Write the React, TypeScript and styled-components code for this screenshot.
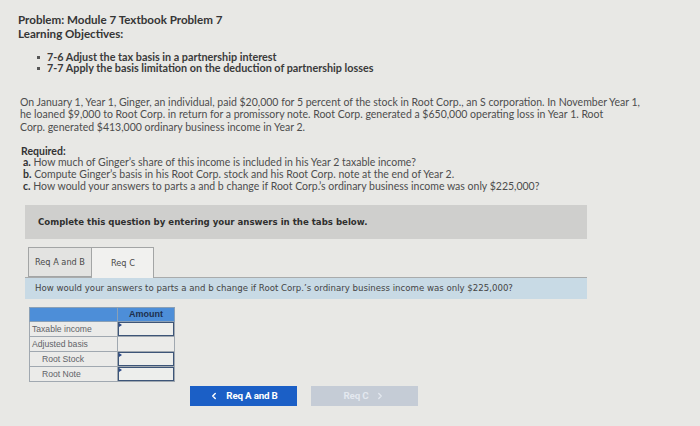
import React from 'react';
import styled, { createGlobalStyle } from 'styled-components';
import { ChevronLeft, ChevronRight } from 'lucide-react';

const GlobalStyle = createGlobalStyle`
  html, body {
    margin: 0;
    padding: 0;
    background: #e8e8e5;
  }
`;

const Page = styled.div`
  width: 700px;
  height: 426px;
  overflow: hidden;
  background: #e8e8e5;
  font-family: Lato, "Open Sans", sans-serif;
  color: #3c3c3c;
  padding: 13px 0 0 18px;
  box-sizing: border-box;
`;

const Title = styled.div`
  font-size: 11.6px;
  line-height: 13.5px;
  font-weight: 700;
  color: #353535;
`;

const Objectives = styled.ul`
  margin: 10.5px 0 0 0;
  padding: 0 0 0 29px;
  list-style: none;
`;

const Objective = styled.li`
  position: relative;
  font-size: 10.8px;
  line-height: 11.6px;
  font-weight: 700;
  color: #3a3a3a;

  &::before {
    content: '';
    position: absolute;
    left: -10px;
    top: 5px;
    width: 3px;
    height: 3px;
    background: #555;
  }
`;

const Body = styled.p`
  margin: 22px 0 0 2px;
  font-size: 10.5px;
  line-height: 12.5px;
  color: #4d4d4d;
  white-space: nowrap;
`;

const Required = styled.div`
  margin: 12.5px 0 0 3px;
  font-size: 10.5px;
  line-height: 11.7px;
  color: #4d4d4d;
`;

const Strong = styled.span`
  font-weight: 700;
  color: #333;
`;

const Part = styled.div`
  padding-left: 2px;
`;

const Work = styled.div`
  margin: 12px 0 0 7px;
  width: 562px;
  font-family: "DejaVu Sans", Verdana, sans-serif;
`;

const Notice = styled.div`
  height: 34px;
  background: #cfcfcd;
  display: flex;
  align-items: center;
  padding-left: 13px;
  font-size: 8.6px;
  font-weight: 700;
  color: #2f2f2f;
`;

const Tabs = styled.div`
  margin-top: 8px;
  display: flex;
  padding-left: 3px;
  border-bottom: 1px solid #a9abab;
`;

const Tab = styled.div<{ $active?: boolean }>`
  height: ${p => (p.$active ? 31 : 30)}px;
  width: ${p => (p.$active ? 62 : 64)}px;
  margin-bottom: ${p => (p.$active ? -1 : 0)}px;
  box-sizing: border-box;
  border: 1px solid #a3a5a5;
  border-bottom: ${p => (p.$active ? 'none' : '1px solid #a3a5a5')};
  border-left: ${p => (p.$active ? 'none' : '1px solid #a3a5a5')};
  background: ${p => (p.$active ? '#f1f1ef' : '#e3e3e1')};
  display: flex;
  align-items: center;
  padding-left: ${p => (p.$active ? 19 : 6)}px;
  font-size: 8.2px;
  color: #4a4a4a;
`;

const Question = styled.div`
  height: 21px;
  background: #c8dae5;
  display: flex;
  align-items: center;
  padding-left: 10px;
  font-size: 8.6px;
  color: #444;
`;

const Table = styled.table`
  margin: 8px 0 0 4px;
  border-collapse: collapse;
  font-family: "Liberation Sans", Arial, sans-serif;
  font-size: 8.6px;
  color: #5f6368;
`;

const HeadCell = styled.th`
  height: 13px;
  padding: 0;
  background: #4d8ed8;
  border: 1px solid #8aa0b6;
  font-weight: 700;
  color: #1d2f4d;
  font-size: 9px;
`;

const LabelCell = styled.td<{ $indent?: boolean }>`
  width: 88px;
  height: 14px;
  padding: 0 0 0 ${p => (p.$indent ? 12 : 2)}px;
  box-sizing: border-box;
  border: 1px solid #a0a8b0;
  background: #ebebe9;
  white-space: nowrap;
`;

const ValueCell = styled.td`
  width: 56px;
  height: 14px;
  padding: 0;
  border: 1px solid #a0a8b0;
  background: #ebebe9;
`;

const Input = styled.div`
  position: relative;
  height: 14px;
  box-sizing: border-box;
  border: 1.5px solid #3d5578;
  background: #edeeec;

  &::before {
    content: '';
    position: absolute;
    left: 0;
    top: 0;
    border-left: 3px solid #2b4a8a;
    border-top: 2px solid transparent;
    border-bottom: 2px solid transparent;
  }
`;

const Nav = styled.div`
  margin: 4px 0 0 165px;
  display: flex;
  gap: 14px;
`;

const NavButton = styled.div<{ $disabled?: boolean }>`
  width: 107px;
  height: 20px;
  background: ${p => (p.$disabled ? '#c5ccd6' : '#1b5fc6')};
  color: ${p => (p.$disabled ? '#e3e8ef' : '#ffffff')};
  display: flex;
  align-items: center;
  justify-content: center;
  gap: 7px;
  font-family: Roboto, "Liberation Sans", sans-serif;
  font-size: 9.8px;
  font-weight: 700;
  letter-spacing: -0.2px;
`;

const rows = [
  { label: 'Taxable income', input: true, indent: false },
  { label: 'Adjusted basis', input: false, indent: false },
  { label: 'Root Stock', input: true, indent: true },
  { label: 'Root Note', input: true, indent: true },
];

export default function App(): React.ReactElement {
  return (
    <Page>
      <GlobalStyle />
      <Title>Problem: Module 7 Textbook Problem 7</Title>
      <Title>Learning Objectives:</Title>
      <Objectives>
        <Objective>7-6 Adjust the tax basis in a partnership interest</Objective>
        <Objective>7-7 Apply the basis limitation on the deduction of partnership losses</Objective>
      </Objectives>
      <Body>
        On January 1, Year 1, Ginger, an individual, paid $20,000 for 5 percent of the stock in Root Corp., an S corporation. In November Year 1,
        <br />
        he loaned $9,000 to Root Corp. in return for a promissory note. Root Corp. generated a $650,000 operating loss in Year 1. Root
        <br />
        Corp. generated $413,000 ordinary business income in Year 2.
      </Body>
      <Required>
        <Strong>Required:</Strong>
        <Part><Strong>a.</Strong> How much of Ginger&rsquo;s share of this income is included in his Year 2 taxable income?</Part>
        <Part><Strong>b.</Strong> Compute Ginger&rsquo;s basis in his Root Corp. stock and his Root Corp. note at the end of Year 2.</Part>
        <Part><Strong>c.</Strong> How would your answers to parts a and b change if Root Corp.&rsquo;s ordinary business income was only $225,000?</Part>
      </Required>
      <Work>
        <Notice>Complete this question by entering your answers in the tabs below.</Notice>
        <Tabs>
          <Tab>Req A and B</Tab>
          <Tab $active>Req C</Tab>
        </Tabs>
        <Question>How would your answers to parts a and b change if Root Corp.&rsquo;s ordinary business income was only $225,000?</Question>
        <Table>
          <thead>
            <tr>
              <HeadCell />
              <HeadCell>Amount</HeadCell>
            </tr>
          </thead>
          <tbody>
            {rows.map(r => (
              <tr key={r.label}>
                <LabelCell $indent={r.indent}>{r.label}</LabelCell>
                <ValueCell>{r.input && <Input />}</ValueCell>
              </tr>
            ))}
          </tbody>
        </Table>
        <Nav>
          <NavButton>
            <ChevronLeft size={10} strokeWidth={3.5} />
            Req A and B
          </NavButton>
          <NavButton $disabled>
            Req C
            <ChevronRight size={10} strokeWidth={3} />
          </NavButton>
        </Nav>
      </Work>
    </Page>
  );
}
